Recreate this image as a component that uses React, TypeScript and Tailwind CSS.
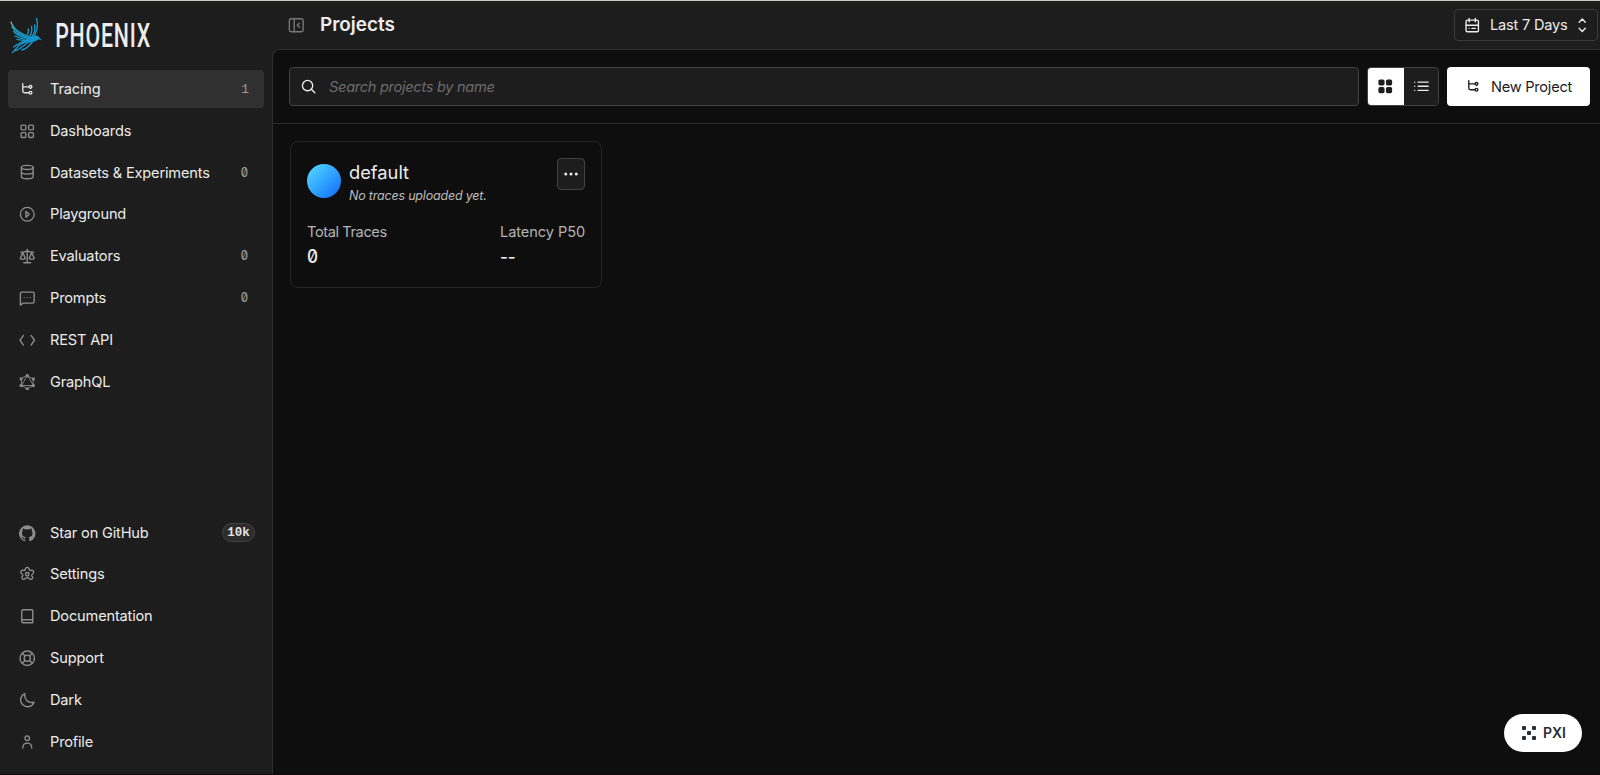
import type { ReactNode } from "react";
import clsx from "clsx";

type IconProps = { size?: number; className?: string; children: ReactNode };

function Icon({ size = 16.5, className, children }: IconProps) {
  return (
    <svg
      width={size}
      height={size}
      viewBox="0 0 24 24"
      fill="none"
      stroke="currentColor"
      strokeWidth="2"
      strokeLinecap="round"
      strokeLinejoin="round"
      className={clsx("shrink-0", className)}
    >
      {children}
    </svg>
  );
}

const tracePaths = (
  <>
    <path d="M5.500 4v10.500a2.500 2.500 0 0 0 2.500 2.500h6.500M5.500 8.500h9" />
    <circle cx="16.700" cy="8.500" r="2" />
    <circle cx="16.700" cy="17" r="2" />
  </>
);

const gridPaths = (
  <>
    <rect x="3" y="3" width="7" height="7" rx="1.500" />
    <rect x="14" y="3" width="7" height="7" rx="1.500" />
    <rect x="3" y="14" width="7" height="7" rx="1.500" />
    <rect x="14" y="14" width="7" height="7" rx="1.500" />
  </>
);

const githubPath = (
  <path
    fill="currentColor"
    stroke="none"
    d="M12 .3a12 12 0 0 0-3.800 23.380c.6.120.83-.26.83-.57L9 21.070c-3.340.72-4.040-1.610-4.040-1.610-.55-1.390-1.340-1.760-1.340-1.760-1.080-.74.090-.73.090-.73 1.200.090 1.840 1.240 1.840 1.240 1.070 1.830 2.810 1.300 3.500 1 .1-.78.420-1.310.76-1.610-2.670-.3-5.470-1.330-5.470-5.930 0-1.310.47-2.380 1.240-3.220-.14-.3-.54-1.520.1-3.180 0 0 1-.32 3.300 1.230a11.500 11.500 0 0 1 6 0c2.280-1.550 3.290-1.230 3.290-1.230.64 1.660.24 2.880.12 3.180a4.650 4.650 0 0 1 1.230 3.220c0 4.610-2.800 5.630-5.480 5.920.42.360.81 1.100.81 2.220l-.01 3.290c0 .31.200.69.820.57A12 12 0 0 0 12 .3"
  />
);

type NavItem = { label: string; icon: ReactNode; count?: number };

const mainItems: NavItem[] = [
  { label: "Tracing", icon: tracePaths, count: 1 },
  { label: "Dashboards", icon: gridPaths },
  {
    label: "Datasets & Experiments",
    count: 0,
    icon: (
      <>
        <ellipse cx="12" cy="5" rx="8.500" ry="3" />
        <path d="M3.500 5v13.500c0 1.700 3.800 3 8.500 3s8.500-1.300 8.500-3V5M3.500 11.800c0 1.700 3.800 3 8.500 3s8.500-1.300 8.500-3" />
      </>
    ),
  },
  {
    label: "Playground",
    icon: (
      <>
        <circle cx="12" cy="12" r="10" />
        <path d="M10 7.800v8.400l5-4.200z" />
      </>
    ),
  },
  {
    label: "Evaluators",
    count: 0,
    icon: (
      <>
        <path d="M12 2v19M7 21.500h10M2.500 6h3c2.500 0 4.500-.7 6.500-1.700 2 1 4 1.700 6.500 1.700h3" />
        <path d="M5.500 6.500 1.800 15.200c2 1.500 5.400 1.500 7.400 0zM18.500 6.500l-3.700 8.700c2 1.500 5.400 1.500 7.400 0z" />
      </>
    ),
  },
  {
    label: "Prompts",
    count: 0,
    icon: (
      <>
        <path d="M2 22V5a2 2 0 0 1 2-2h16a2 2 0 0 1 2 2v12a2 2 0 0 1-2 2H6z" />
        <path d="M7.500 11h.01M12 11h.01M16.500 11h.01" />
      </>
    ),
  },
  {
    label: "REST API",
    icon: <path d="m6.500 5-5 7 5 7M17.500 5l5 7-5 7" />,
  },
  {
    label: "GraphQL",
    icon: (
      <>
        <path
          strokeWidth="1.300"
          d="M12 2.500 20.500 7.200v9.600L12 21.500l-8.500-4.700V7.200zM12 2.500 3.500 16.800h17z"
        />
        <g fill="currentColor" stroke="none">
          <circle cx="12" cy="2.300" r="2.300" />
          <circle cx="21" cy="7.200" r="2.300" />
          <circle cx="21" cy="16.800" r="2.300" />
          <circle cx="12" cy="21.700" r="2.300" />
          <circle cx="3" cy="16.800" r="2.300" />
          <circle cx="3" cy="7.200" r="2.300" />
        </g>
      </>
    ),
  },
];

const footerItems: NavItem[] = [
  { label: "Star on GitHub", icon: githubPath },
  {
    label: "Settings",
    icon: (
      <>
        <path d="M9 5.200C9.300 3 10.300 2 12 2s2.700 1 3 3.200c.2 1 1 1.500 2 1.200 2.200-.6 3.800 0 4.300 1.600s-.2 3-2 4c-.9.600-1.100 1.400-.5 2.300 1.300 1.800 1.300 3.500 0 4.500s-3 .7-4.400-1c-.7-.9-1.300-.9-2.400-.9s-1.700 0-2.400.9c-1.400 1.700-3.100 2-4.400 1s-1.300-2.700 0-4.500c.6-.9.4-1.700-.5-2.300-1.800-1-2.500-2.400-2-4S4.800 5.800 7 6.400c1 .3 1.800-.2 2-1.200z" />
        <circle cx="12" cy="12" r="2.500" />
      </>
    ),
  },
  {
    label: "Documentation",
    icon: (
      <path d="M20 17V4a1.500 1.500 0 0 0-1.500-1.500H6A2 2 0 0 0 4 4.500v15a2 2 0 0 0 2 2h14V17H6a2 2 0 0 0-2 2" />
    ),
  },
  {
    label: "Support",
    icon: (
      <>
        <circle cx="12" cy="12" r="10.500" />
        <circle cx="12" cy="12" r="4.500" />
        <path d="m4.800 4.800 4 4M19.200 4.800l-4 4M4.800 19.200l4-4M19.200 19.200l-4-4" />
      </>
    ),
  },
  {
    label: "Dark",
    icon: <path d="M8.500 2.200a10 10 0 1 0 13.300 12.600C14 17 7 11 8.500 2.200z" />,
  },
  {
    label: "Profile",
    icon: (
      <>
        <circle cx="12" cy="6" r="3.200" />
        <path d="M5.500 20.500v-1a6.500 6.500 0 0 1 13 0v1" />
      </>
    ),
  },
];

function Logo() {
  return (
    <div className="flex h-[69px] shrink-0 items-start pl-[1px] pt-[15px]">
      <svg width="240" height="44" viewBox="0 0 240 44" fill="none">
        <defs>
          <linearGradient id="bird" x1="2" y1="4" x2="20" y2="30" gradientUnits="userSpaceOnUse">
            <stop stopColor="#74c9a8" />
            <stop offset="0.35" stopColor="#1ba0c8" />
            <stop offset="1" stopColor="#1494cf" />
          </linearGradient>
        </defs>
        <g stroke="url(#bird)" strokeWidth="1.300" strokeLinecap="round">
          <path d="M2 6c2 7 9 12 21 15.500" />
          <path d="M3 11c3 5 9 9 19 11" />
          <path d="M4.500 15.500c4 4 9 6 17 7.500" />
          <path d="M6 20c4 2 9 3.500 15 3.500" />
          <path d="M8 23.300c4 1 8 1.300 13 .8" />
          <path d="M27.500 2.500c2 7 1 12-2.500 18" />
          <path d="M25.500 9c1 4 0 8-2.500 11.500" />
          <path d="M22.500 10.500c.8 4 .3 6.500-1.500 9" />
          <path d="M19.300 13c.3 2.500 0 4-.8 5.500" />
          <path d="M3.500 36.500C8 32 11 26 21 25" />
          <path d="M6.500 34.500C12 33 15 28 22 25" />
          <path d="M4.500 31C8 29 11 26 17 25" />
          <path d="M13 34c5-1 8-5 11-9" />
        </g>
        <path fill="#1494cf" d="M20 22c2-1.500 5-3.500 9-2l4 4.500-3.500-1.200C27 26 22 26.500 19 26z" />
        <text
          transform="translate(46.200 31) scale(0.660 1)"
          fill="#ededed"
          fontFamily="Roboto, sans-serif"
          fontSize="32.300"
          fontWeight="500"
          textLength="144"
          lengthAdjust="spacing"
        >
          PHOENIX
        </text>
      </svg>
    </div>
  );
}

function NavRow({ item, active }: { item: NavItem; active?: boolean }) {
  return (
    <a
      className={clsx(
        "flex h-[37.860px] shrink-0 items-center rounded pl-[11px] pr-4",
        active && "bg-[#303030]"
      )}
    >
      <Icon className={active ? "text-[#e4e4e4]" : "text-[#8d8d8d]"}>{item.icon}</Icon>
      <span className="ml-[14.500px] flex-1 whitespace-nowrap pt-[1.600px] text-[14.600px] tracking-[-0.180px]">
        {item.label}
      </span>
      {item.count === 0 && (
        <span className="origin-right scale-x-[0.9] pt-px text-[12.500px] font-medium slashed-zero text-[#9a9a9a]">
          0
        </span>
      )}
      {item.count === 1 && (
        <span className="-mr-px pt-px font-['Liberation_Mono',monospace] text-[13px] text-[#9a9a9a]">1</span>
      )}
      {item.label === "Star on GitHub" && (
        <span className="-mr-[7px] flex h-[19px] w-[33px] items-center justify-center rounded-full border border-[#434343] bg-[#2c2c2c] pt-px font-['Liberation_Mono',monospace] text-[12.500px] font-bold text-[#e4e4e4]">
          10k
        </span>
      )}
    </a>
  );
}

function Sidebar() {
  return (
    <nav className="flex w-[272px] shrink-0 flex-col px-2 pb-[13px]">
      <Logo />
      <div className="flex flex-col gap-1">
        {mainItems.map((item) => (
          <NavRow key={item.label} item={item} active={item.label === "Tracing"} />
        ))}
      </div>
      <div className="mt-auto flex flex-col gap-1">
        {footerItems.map((item) => (
          <NavRow key={item.label} item={item} />
        ))}
      </div>
    </nav>
  );
}

function Header() {
  return (
    <header className="flex h-12 shrink-0 items-center pl-4 pr-[2px]">
      <Icon className="text-[#777]">
        <rect x="2" y="2.500" width="20" height="19" rx="2.500" />
        <path d="M9 2.500v19M16.500 9l-3 3 3 3" />
      </Icon>
      <h1 className="ml-[15.500px] flex-1 text-[18.900px] font-semibold">Projects</h1>
      <button className="flex h-8 w-36 items-center rounded border border-[#3a3a3a] pl-[9px]">
        <Icon>
          <rect x="3" y="4.500" width="18" height="17" rx="2" />
          <path d="M7.500 2v5M16.500 2v5M3 12h18M7.500 16.500h.01M11.500 16.500h5" />
        </Icon>
        <span className="ml-[9.500px] flex-1 whitespace-nowrap pt-px text-left text-[14.600px] tracking-[-0.2px]">
          Last 7 Days
        </span>
        <Icon className="mr-[7px]">
          <path d="m7.500 7.500 4.500-4.500 4.500 4.500M7.500 16.500l4.500 4.500 4.500-4.500" />
        </Icon>
      </button>
    </header>
  );
}

function Toolbar() {
  return (
    <div className="flex h-[74px] shrink-0 items-center gap-2 border-b border-[#2e2e2e] pl-4 pr-[10px]">
      <label className="flex h-[39px] flex-1 items-center rounded border border-[#424242] bg-[#1d1d1d] pl-[10px]">
        <Icon>
          <circle cx="11" cy="11" r="7.500" />
          <path d="m16.500 16.500 5 5" />
        </Icon>
        <span className="ml-[12.500px] pt-[2px] text-[14.600px] italic tracking-[-0.3px] text-[#6b6b6b]">
          Search projects by name
        </span>
      </label>
      <div className="flex h-[39px] w-[72px] overflow-hidden rounded border border-[#424242]">
        <button className="-my-px -ml-px flex w-[37px] items-center justify-center bg-white text-[#1d1d1d]">
          <Icon>
            <g fill="currentColor">{gridPaths}</g>
          </Icon>
        </button>
        <button className="flex flex-1 items-center justify-center bg-[#1d1d1d]">
          <Icon>
            <path d="M7.500 6H22M7.500 12H22M7.500 18H22M2.500 6h.01M2.500 12h.01M2.500 18h.01" />
          </Icon>
        </button>
      </div>
      <button className="flex h-[39px] w-[143px] items-center rounded bg-white pl-[18px] text-[#1d1d1d]">
        <Icon>{tracePaths}</Icon>
        <span className="ml-[9.500px] whitespace-nowrap pt-[2px] text-[14.600px] tracking-[-0.250px]">
          New Project
        </span>
      </button>
    </div>
  );
}

function ProjectCard() {
  return (
    <article className="h-[147px] w-[312px] rounded-lg border border-[#242424] px-4 pt-4">
      <div className="flex">
        <div className="mt-[6px] size-[34px] shrink-0 rounded-full bg-linear-to-br from-[#5bdcff] to-[#1a66fa]" />
        <div className="ml-2 flex-1">
          <h2 className="mt-[2px] text-[18.300px] leading-6">default</h2>
          <p className="mt-px whitespace-nowrap text-[12.500px] italic leading-[21px] tracking-[-0.2px] text-[#bdbdbd]">
            No traces uploaded yet.
          </p>
        </div>
        <button className="flex h-8 w-7 items-center justify-center rounded border border-[#424242] bg-[#1d1d1d]">
          <Icon size={18}>
            <g fill="currentColor" stroke="none">
              <circle cx="5" cy="12" r="2" />
              <circle cx="12" cy="12" r="2" />
              <circle cx="19" cy="12" r="2" />
            </g>
          </Icon>
        </button>
      </div>
      <dl className="mt-4 flex justify-between">
        <div>
          <dt className="text-[14.600px] leading-5 tracking-[-0.4px] text-[#b4b4b4]">Total Traces</dt>
          <dd className="mt-[3px] origin-left scale-x-[0.9] text-[19px] font-medium slashed-zero leading-6">
            0
          </dd>
        </div>
        <div className="w-[85px]">
          <dt className="whitespace-nowrap text-[14.600px] leading-5 tracking-[-0.080px] text-[#b4b4b4]">
            Latency P50
          </dt>
          <dd className="mt-[3px] text-[17px] font-medium leading-6">--</dd>
        </div>
      </dl>
    </article>
  );
}

function PxiButton() {
  return (
    <button className="absolute bottom-[22px] right-[18px] flex h-[38px] w-[78px] items-center rounded-full bg-white pl-[18px] text-[#2a2d35]">
      <svg width="14" height="14" viewBox="0 0 14 14" fill="currentColor">
        <rect width="4" height="4" rx="1" />
        <rect x="10" width="4" height="4" rx="1" />
        <rect x="5" y="5" width="4" height="4" rx="1" />
        <rect y="10" width="4" height="4" rx="1" />
        <rect x="10" y="10" width="4" height="4" rx="1" />
      </svg>
      <span className="-mt-px ml-[7px] text-[14px] font-semibold">PXI</span>
    </button>
  );
}

export default function App() {
  return (
    <div className="relative flex h-[775px] w-[1600px] overflow-hidden border-y border-b-[#10080c] border-t-[#c8cdc6] bg-[#1d1d1d] font-['Inter',sans-serif] text-[#ececec]">
      <Sidebar />
      <div className="flex min-w-0 flex-1 flex-col">
        <Header />
        <main className="flex flex-1 flex-col rounded-tl-lg border-l border-t border-[#2e2e2e] bg-[#0e0e0e]">
          <Toolbar />
          <div className="pl-[17px] pt-[17px]">
            <ProjectCard />
          </div>
        </main>
      </div>
      <PxiButton />
    </div>
  );
}
